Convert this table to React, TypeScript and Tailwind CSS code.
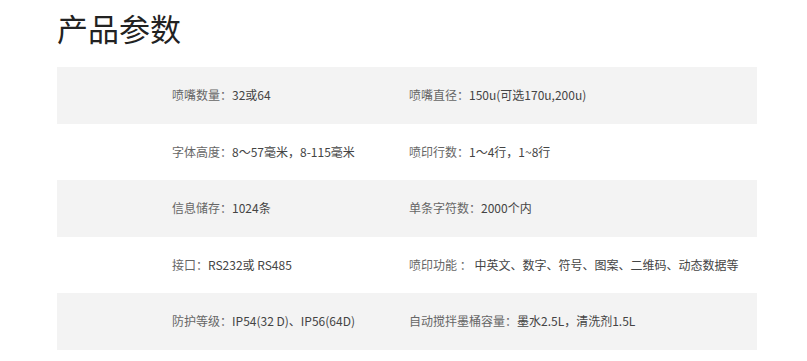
const rows: [string, string, string, string][] = [
  ['喷嘴数量：', '32或64', '喷嘴直径：', '150u(可选170u,200u)'],
  ['字体高度：', '8～57毫米，8-115毫米', '喷印行数：', '1～4行，1~8行'],
  ['信息储存：', '1024条', '单条字符数：', '2000个内'],
  ['接口：', 'RS232或 RS485', '喷印功能 ： ', '中英文、数字、符号、图案、二维码、动态数据等'],
  ['防护等级：', 'IP54(32 D)、IP56(64D)', '自动搅拌墨桶容量：', '墨水2.5L，清洗剂1.5L'],
];

export default function App() {
  return (
    <div
      className="w-[807px] h-[361px] bg-white overflow-hidden"
      style={{ fontFamily: '"Microsoft YaHei", "Noto Sans CJK SC", sans-serif' }}
    >
      <div className="pl-[57px] pr-[50px]">
        <h1 className="text-[31px] leading-[38px] pt-[9px] font-normal text-[#222] mb-[20px]">产品参数</h1>
        <div className="w-[700px]">
          {rows.map((r, i) => (
            <div
              key={i}
              className={`flex items-center h-[56.5px] text-[12px] ${i % 2 === 0 ? 'bg-[#f3f3f3]' : 'bg-white'}`}
            >
              <div className="w-[352px] pl-[115px] whitespace-nowrap">
                <span className="text-[#666]">{r[0]}</span>
                <span className="text-[#444]">{r[1]}</span>
              </div>
              <div className="flex-1 whitespace-nowrap">
                <span className="text-[#666]">{r[2]}</span>
                <span className="text-[#444]">{r[3]}</span>
              </div>
            </div>
          ))}
        </div>
      </div>
    </div>
  );
}
